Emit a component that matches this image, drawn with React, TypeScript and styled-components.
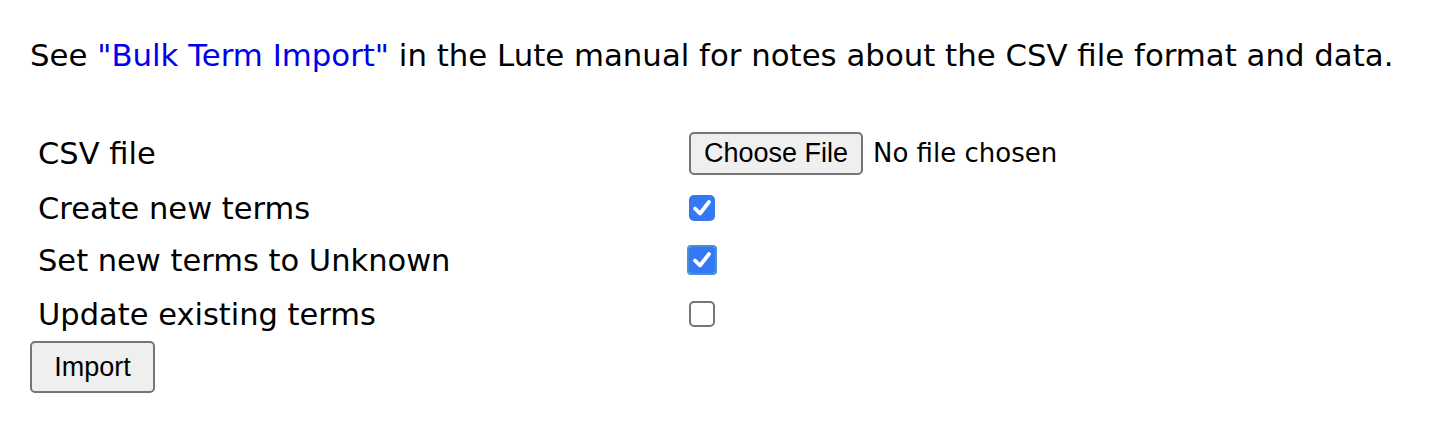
import React from "react";
import styled, { createGlobalStyle } from "styled-components";

const Global = createGlobalStyle`
  html, body { margin: 0; padding: 0; background: #fff; }
  body { font-family: "DejaVu Sans", Verdana, sans-serif; color: #000; }
`;

const Page = styled.div`
  padding: 36px 30px 0 30px;
  font-size: 30.5px;
`;

const Intro = styled.p`
  margin: 0 0 49px 0;
  line-height: 38px;
  font-size: 30.8px;
`;

const Link = styled.a`
  color: #0000ee;
  text-decoration: none;
`;

const FormTable = styled.div`
  display: grid;
  grid-template-columns: 651px auto;
  padding-left: 8px;
`;

const Label = styled.div<{ $h: number }>`
  height: ${(p) => p.$h}px;
  display: flex;
  align-items: center;
  font-size: 30.5px;
`;

const Cell = styled.div<{ $h: number }>`
  height: ${(p) => p.$h}px;
  display: flex;
  align-items: center;
`;

const FileButton = styled.button`
  font-family: "Liberation Sans", Arial, sans-serif;
  font-size: 27px;
  height: 43px;
  width: 174px;
  padding: 0;
  background: #efefef;
  border: 2px solid #767676;
  border-radius: 5px;
  color: #000;
  margin: 0;
`;

const FileStatus = styled.span`
  font-size: 26px;
  margin-left: 10px;
`;

const Box = styled.span<{ $checked: boolean; $focus?: boolean }>`
  width: 26px;
  height: 26px;
  box-sizing: border-box;
  border-radius: ${(p) => (p.$focus ? "2px" : "5px")};
  display: inline-flex;
  align-items: center;
  justify-content: center;
  background: ${(p) => (p.$checked ? "#3478f6" : "#fff")};
  border: ${(p) => (p.$checked ? "none" : "2px solid #767676")};
  outline: ${(p) => (p.$focus ? "2px solid #4a90d9" : "none")};
  outline-offset: 0px;
`;

const ImportButton = styled.button`
  font-family: "Liberation Sans", Arial, sans-serif;
  font-size: 27px;
  width: 125px;
  height: 52px;
  margin: 0;
  background: #efefef;
  border: 2px solid #767676;
  border-radius: 5px;
  color: #000;
`;

const Check = () => (
  <svg width="20" height="18" viewBox="0 0 20 18">
    <path d="M3 9.5 L8 14.5 L17 3" fill="none" stroke="#fff" strokeWidth="3.8" strokeLinecap="round" strokeLinejoin="round" />
  </svg>
);

export default function App() {
  return (
    <>
      <Global />
      <Page>
        <Intro>
          See <Link href="#">"Bulk Term Import"</Link> in the Lute manual for notes about the CSV file format and data.
        </Intro>
        <FormTable>
          <Label $h={60}>CSV file</Label>
          <Cell $h={60}>
            <FileButton>Choose File</FileButton>
            <FileStatus>No file chosen</FileStatus>
          </Cell>
          <Label $h={50}>Create new terms</Label>
          <Cell $h={50}>
            <Box $checked>
              <Check />
            </Box>
          </Cell>
          <Label $h={54}>Set new terms to Unknown</Label>
          <Cell $h={54}>
            <Box $checked $focus>
              <Check />
            </Box>
          </Cell>
          <Label $h={54}>Update existing terms</Label>
          <Cell $h={54}>
            <Box $checked={false} />
          </Cell>
        </FormTable>
        <ImportButton>Import</ImportButton>
      </Page>
    </>
  );
}
